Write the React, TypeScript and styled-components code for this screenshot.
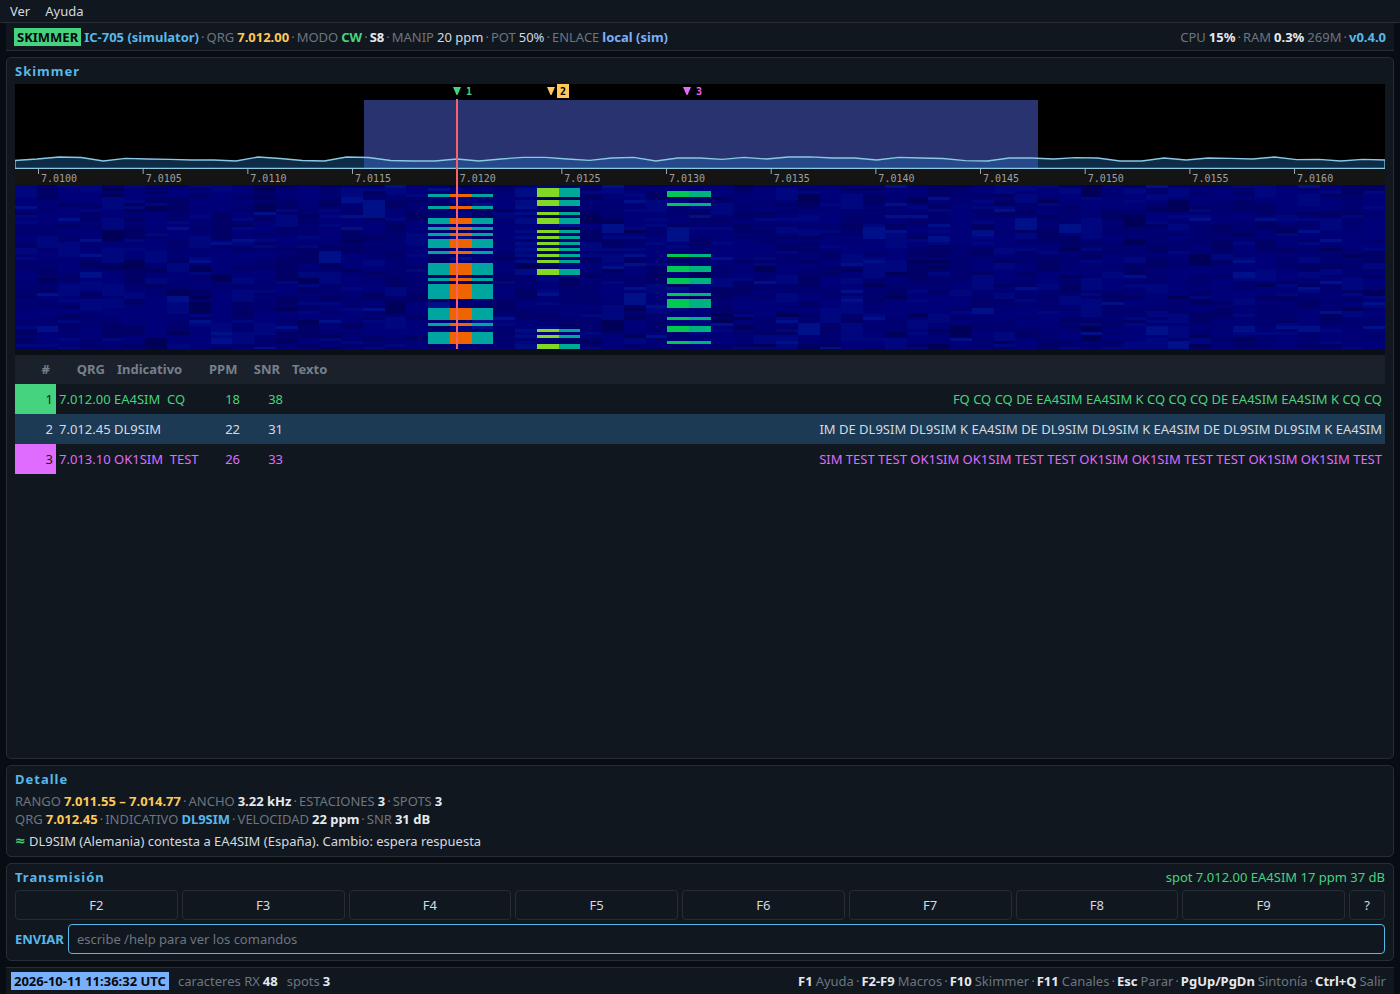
import React from "react";
import styled, { createGlobalStyle, css } from "styled-components";

const color = {
  page: "#080c13",
  panel: "#11171e",
  line: "#282d35",
  text: "#d5dae1",
  strong: "#e6e9ee",
  muted: "#6c7580",
  cyan: "#57b8ea",
  green: "#46d37f",
  amber: "#ffc857",
  blue: "#79b0fb",
  magenta: "#df6cff",
};

const GlobalStyle = createGlobalStyle`
  * { box-sizing: border-box; }
  body {
    margin: 0;
    background: ${color.page};
    color: ${color.text};
    font: 13px/18px "Noto Sans", sans-serif;
  }
  button, input { font: inherit; color: inherit; }
`;

const Window = styled.div`
  display: flex;
  flex-direction: column;
  min-height: 100vh;
`;

const MenuBar = styled.nav`
  display: flex;
  gap: 1px;
  height: 23px;
  padding: 0 3px;
  background: ${color.panel};
  border-bottom: 1px solid ${color.line};
`;

const MenuItem = styled.button`
  padding: 0 7px;
  border: 0;
  background: none;
`;

const Content = styled.main`
  flex: 1;
  display: flex;
  flex-direction: column;
  gap: 6px;
  padding: 0 6px;
`;

const Bar = styled.div<{ $edge: "top" | "bottom" }>`
  display: flex;
  justify-content: space-between;
  align-items: center;
  height: 28px;
  padding: 0 8px;
  white-space: nowrap;
  background: ${color.panel};
  ${(p) => (p.$edge === "top" ? css`border-top` : css`border-bottom`)}: 1px solid ${color.line};
`;

const FooterBar = styled(Bar)`
  height: 27px;
  padding: 0 8px 0 5px;
`;

const Line = styled.div`
  display: flex;
  flex-wrap: wrap;
  gap: 0 3px;
  color: ${color.muted};
`;

const Separator = styled.span`
  margin: 0 -1px;
  &::before { content: "·"; }
`;

const Plain = styled.span`
  color: ${color.text};
`;

const Value = styled.b<{ $tone?: string }>`
  color: ${(p) => p.$tone ?? color.strong};
`;

const Badge = styled.b<{ $tone: string }>`
  padding: 0 3px;
  background: ${(p) => p.$tone};
  color: #05080c;
`;

const Counters = styled.div`
  display: flex;
  gap: 9px;
`;

const Panel = styled.section<{ $grow?: boolean }>`
  display: flex;
  flex-direction: column;
  flex: ${(p) => (p.$grow ? "1" : "none")};
  padding: 4px 8px 6px;
  background: ${color.panel};
  border: 1px solid ${color.line};
  border-radius: 5px;
`;

const PanelHead = styled.header`
  display: flex;
  justify-content: space-between;
  margin-bottom: 4px;
`;

const Title = styled.h2`
  margin: 0;
  font-size: 13px;
  line-height: 18px;
  letter-spacing: 1px;
  color: ${color.cyan};
`;

const SpotNote = styled.output`
  color: ${color.green};
`;

const Note = styled.p`
  display: flex;
  gap: 3px;
  margin: 4px 0 0;
`;

const NoteMark = styled.b`
  font-family: "DejaVu Sans", sans-serif;
  color: ${color.green};
`;

const Scope = styled.svg`
  display: block;
  width: 100%;
  height: 265px;
  background: #000;
`;

const ScopeText = styled.text<{ $bold?: boolean }>`
  font: ${(p) => (p.$bold ? 700 : 400)} 10px "DejaVu Sans Mono", monospace;
`;

const ScopeWrap = styled.div`
  padding-bottom: 6px;
  background: #0a0e15;
`;

const Stations = styled.table`
  width: 100%;
  table-layout: fixed;
  border-collapse: collapse;
`;

const HeadCell = styled.th<{ $width?: number; $left?: boolean }>`
  width: ${(p) => (p.$width ? `${p.$width}px` : "auto")};
  height: 29px;
  padding: 0 6px 2px;
  text-align: ${(p) => (p.$left ? "left" : "right")};
  color: #76808c;
  background: #1b212a;
`;

const Row = styled.tr<{ $tone: string; $selected?: boolean }>`
  color: ${(p) => p.$tone};
  background: ${(p) => (p.$selected ? "#1d3a55" : "transparent")};
`;

const Cell = styled.td<{ $left?: boolean; $fill?: string }>`
  height: 30px;
  padding: 0 3px;
  text-align: ${(p) => (p.$left ? "left" : "right")};
  white-space: pre;
  ${(p) => p.$fill && css`background: ${p.$fill}; color: #10151c;`}
`;

const Macros = styled.div`
  display: flex;
  gap: 4px;
`;

const MacroButton = styled.button<{ $small?: boolean }>`
  flex: ${(p) => (p.$small ? "0 0 36px" : "1 1 0")};
  height: 30px;
  padding: 0;
  background: ${color.panel};
  border: 1px solid ${color.line};
  border-radius: 4px;
`;

const SendRow = styled.form`
  display: flex;
  align-items: center;
  gap: 4px;
  margin-top: 4px;
`;

const SendLabel = styled.label`
  font-weight: 700;
  color: ${color.cyan};
`;

const SendInput = styled.input`
  flex: 1;
  height: 30px;
  padding: 0 8px;
  background: ${color.panel};
  border: 1px solid ${color.cyan};
  border-radius: 4px;
  outline: 0;
  &::placeholder { color: ${color.muted}; opacity: 1; }
`;

/* ---- Panoramic view: spectrum, frequency scale and waterfall ---- */

const BINS = 63;
const LINES = 55;
const SPAN = 1370;
const pct = (x: number) => `${(x / SPAN) * 100}%`;

const trace = [
  160.5, 159, 157, 157.5, 161, 158.3, 159, 159.3, 160, 160, 161, 157, 158.5, 160.5, 161, 157,
  157.5, 160.5, 161, 161, 159, 161, 159, 157.3, 157.3, 159, 160.3, 158, 157.3, 161, 158, 158,
  159.3, 157.3, 159, 157, 156.8, 158, 158, 160, 157.3, 158, 158.5, 160.7, 161, 158, 158, 159,
  157.7, 158, 161, 161, 158, 160, 158, 158.3, 159, 157, 159.7, 159.3, 161, 159.3, 160,
].map((y) => y - 84);

const tracePoints = trace.map((y, i) => `${(i * SPAN) / (BINS - 1)},${y}`).join(" ");

const noiseShades = ["#000058", "#000066", "#000070", "#000078", "#00067e", "#001088"];

function buildNoise() {
  let seed = 7051;
  const random = () => {
    seed = (seed * 1664525 + 1013904223) % 4294967296;
    return seed / 4294967296;
  };
  const paths = noiseShades.map(() => "");
  for (let col = 0; col < BINS; col++) {
    let line = 0;
    while (line < LINES) {
      const length = random() < 0.75 ? 1 : 2 + Math.floor(random() * 3);
      const level = Math.min(5, Math.floor((random() + random()) * 3));
      const end = Math.min(LINES, line + length);
      paths[level] += `M${col} ${line}h1v${end - line}h-1z`;
      line = end;
    }
  }
  return paths;
}

const noise = buildNoise();

type Signal = { bin: number; shades: string[]; runs: [number, number][] };

const signals: Signal[] = [
  {
    bin: 19,
    shades: ["#00a5a0", "#f06400", "#00a5a0"],
    runs: [[3, 1], [7, 1], [11, 2], [14, 1], [16, 1], [18, 3], [22, 1], [26, 4], [31, 1], [33, 5], [41, 4], [46, 1], [49, 4]],
  },
  {
    bin: 23,
    shades: ["#000c84", "#82d822", "#00a896"],
    runs: [[1, 3], [5, 2], [9, 1], [11, 2], [15, 1], [17, 1], [19, 1], [21, 1], [23, 1], [25, 1], [28, 2], [48, 1], [50, 1], [53, 2]],
  },
  {
    bin: 30,
    shades: ["#00c853", "#00b280"],
    runs: [[2, 2], [6, 1], [23, 1], [27, 2], [31, 2], [36, 1], [38, 3], [44, 1], [47, 2], [52, 1]],
  },
];

const ticks = Array.from({ length: 13 }, (_, i) => ({
  x: 23.5 + i * 104.67,
  label: (7.01 + i * 0.0005).toFixed(4),
}));

const markers = [
  { n: 1, x: 442, tone: color.green, label: 451 },
  { n: 2, x: 536, tone: color.amber, label: 545, active: true },
  { n: 3, x: 672, tone: color.magenta, label: 681 },
];

function Panorama() {
  return (
    <Scope role="img" aria-label="Espectro y cascada">
      <rect x={pct(349)} y="16" width={pct(674)} height="69" fill="#28336f" />
      <svg width="100%" height="85" viewBox={`0 0 ${SPAN} 85`} preserveAspectRatio="none">
        <polygon
          points={`0,84.5 ${tracePoints} ${SPAN},84.5`}
          fill="rgba(30,110,180,.4)"
          stroke="#8cc8e4"
          strokeWidth="1.3"
        />
      </svg>
      <rect y="85" width="100%" height="16" fill="#141414" />
      {ticks.map((t) => (
        <g key={t.label}>
          <rect x={pct(t.x - 0.5)} y="85" width="1" height="5" fill="#a8a8a8" />
          <ScopeText x={pct(t.x + 2.5)} y="98" fill="#a0a0a0">{t.label}</ScopeText>
        </g>
      ))}
      <svg y="101" width="100%" height="164" viewBox={`0 0 ${BINS} 54.67`} preserveAspectRatio="none" shapeRendering="crispEdges">
        <rect width={BINS} height={LINES} fill="#000068" />
        {noise.map((d, i) => <path key={i} d={d} fill={noiseShades[i]} />)}
        {signals.map((s) =>
          s.shades.map((shade, i) => (
            <path key={`${s.bin}-${i}`} fill={shade} d={s.runs.map(([y, h]) => `M${s.bin + i} ${y}h1v${h}h-1z`).join("")} />
          )),
        )}
      </svg>
      <rect x={pct(441)} y="15" width="2" height="250" fill="#f8606a" />
      {markers.map((m) => (
        <g key={m.n}>
          <svg x={pct(m.x)} overflow="visible">
            <path d="M-4 3h8l-3.5 8h-1z" fill={m.tone} />
          </svg>
          {m.active && <rect x={pct(m.label - 3)} width="12" height="14" fill={m.tone} />}
          <ScopeText $bold x={pct(m.label)} y="11" fill={m.active ? "#000" : m.tone}>{m.n}</ScopeText>
        </g>
      ))}
    </Scope>
  );
}

const stations = [
  { n: 1, qrg: "7.012.00", call: "EA4SIM  CQ", ppm: 18, snr: 38, tone: color.green, fill: color.green,
    text: "FQ CQ CQ DE EA4SIM EA4SIM K CQ CQ CQ DE EA4SIM EA4SIM K CQ CQ" },
  { n: 2, qrg: "7.012.45", call: "DL9SIM", ppm: 22, snr: 31, tone: color.text, selected: true,
    text: "IM DE DL9SIM DL9SIM K EA4SIM DE DL9SIM DL9SIM K EA4SIM DE DL9SIM DL9SIM K EA4SIM" },
  { n: 3, qrg: "7.013.10", call: "OK1SIM  TEST", ppm: 26, snr: 33, tone: color.magenta, fill: color.magenta,
    text: "SIM TEST TEST OK1SIM OK1SIM TEST TEST OK1SIM OK1SIM TEST TEST OK1SIM OK1SIM TEST" },
];

const macros = ["F2", "F3", "F4", "F5", "F6", "F7", "F8", "F9"];

const shortcuts = [
  ["F1", "Ayuda"], ["F2-F9", "Macros"], ["F10", "Skimmer"], ["F11", "Canales"],
  ["Esc", "Parar"], ["PgUp/PgDn", "Sintonía"], ["Ctrl+Q", "Salir"],
];

export default function App() {
  return (
    <Window>
      <GlobalStyle />
      <MenuBar>
        <MenuItem>Ver</MenuItem>
        <MenuItem>Ayuda</MenuItem>
      </MenuBar>
      <Content>
        <Bar $edge="bottom">
          <Line>
            <Badge $tone={color.green}>SKIMMER</Badge>
            <Value $tone={color.cyan}>IC-705 (simulator)</Value>
            <Separator />
            <span>QRG</span>
            <Value $tone={color.amber}>7.012.00</Value>
            <Separator />
            <span>MODO</span>
            <Value $tone={color.green}>CW</Value>
            <Separator />
            <Value>S8</Value>
            <Separator />
            <span>MANIP</span>
            <Plain>20 ppm</Plain>
            <Separator />
            <span>POT</span>
            <Plain>50%</Plain>
            <Separator />
            <span>ENLACE</span>
            <Value $tone={color.blue}>local (sim)</Value>
          </Line>
          <Line>
            <span>CPU</span>
            <Value>15%</Value>
            <Separator />
            <span>RAM</span>
            <Value>0.3%</Value>
            <span>269M</span>
            <Separator />
            <Value $tone={color.cyan}>v0.4.0</Value>
          </Line>
        </Bar>

        <Panel $grow>
          <PanelHead><Title>Skimmer</Title></PanelHead>
          <ScopeWrap><Panorama /></ScopeWrap>
          <Stations>
            <thead>
              <tr>
                <HeadCell $width={41}>#</HeadCell>
                <HeadCell $width={55}>QRG</HeadCell>
                <HeadCell $width={92} $left>Indicativo</HeadCell>
                <HeadCell $width={40}>PPM</HeadCell>
                <HeadCell $width={43}>SNR</HeadCell>
                <HeadCell $left>Texto</HeadCell>
              </tr>
            </thead>
            <tbody>
              {stations.map((s) => (
                <Row key={s.n} $tone={s.tone} $selected={s.selected}>
                  <Cell $fill={s.fill}>{s.n}</Cell>
                  <Cell>{s.qrg}</Cell>
                  <Cell $left>{s.call}</Cell>
                  <Cell>{s.ppm}</Cell>
                  <Cell>{s.snr}</Cell>
                  <Cell>{s.text}</Cell>
                </Row>
              ))}
            </tbody>
          </Stations>
        </Panel>

        <Panel>
          <PanelHead><Title>Detalle</Title></PanelHead>
          <Line>
            <span>RANGO</span>
            <Value $tone={color.amber}>7.011.55 – 7.014.77</Value>
            <Separator />
            <span>ANCHO</span>
            <Value>3.22 kHz</Value>
            <Separator />
            <span>ESTACIONES</span>
            <Value>3</Value>
            <Separator />
            <span>SPOTS</span>
            <Value>3</Value>
          </Line>
          <Line>
            <span>QRG</span>
            <Value $tone={color.amber}>7.012.45</Value>
            <Separator />
            <span>INDICATIVO</span>
            <Value $tone={color.cyan}>DL9SIM</Value>
            <Separator />
            <span>VELOCIDAD</span>
            <Value>22 ppm</Value>
            <Separator />
            <span>SNR</span>
            <Value>31 dB</Value>
          </Line>
          <Note>
            <NoteMark>≈</NoteMark>
            <span>DL9SIM (Alemania) contesta a EA4SIM (España). Cambio: espera respuesta</span>
          </Note>
        </Panel>

        <Panel>
          <PanelHead>
            <Title>Transmisión</Title>
            <SpotNote>spot 7.012.00 EA4SIM 17 ppm 37 dB</SpotNote>
          </PanelHead>
          <Macros>
            {macros.map((m) => <MacroButton key={m}>{m}</MacroButton>)}
            <MacroButton $small>?</MacroButton>
          </Macros>
          <SendRow onSubmit={(e) => e.preventDefault()}>
            <SendLabel htmlFor="send">ENVIAR</SendLabel>
            <SendInput id="send" placeholder="escribe /help para ver los comandos" />
          </SendRow>
        </Panel>

        <FooterBar as="footer" $edge="top">
          <Counters>
            <Badge $tone={color.blue}>2026-10-11 11:36:32 UTC</Badge>
            <Line><span>caracteres RX</span><Value>48</Value></Line>
            <Line><span>spots</span><Value>3</Value></Line>
          </Counters>
          <Line>
            {shortcuts.map(([key, action], i) => (
              <React.Fragment key={key}>
                {i > 0 && <Separator />}
                <Value>{key}</Value>
                <span>{action}</span>
              </React.Fragment>
            ))}
          </Line>
        </FooterBar>
      </Content>
    </Window>
  );
}
